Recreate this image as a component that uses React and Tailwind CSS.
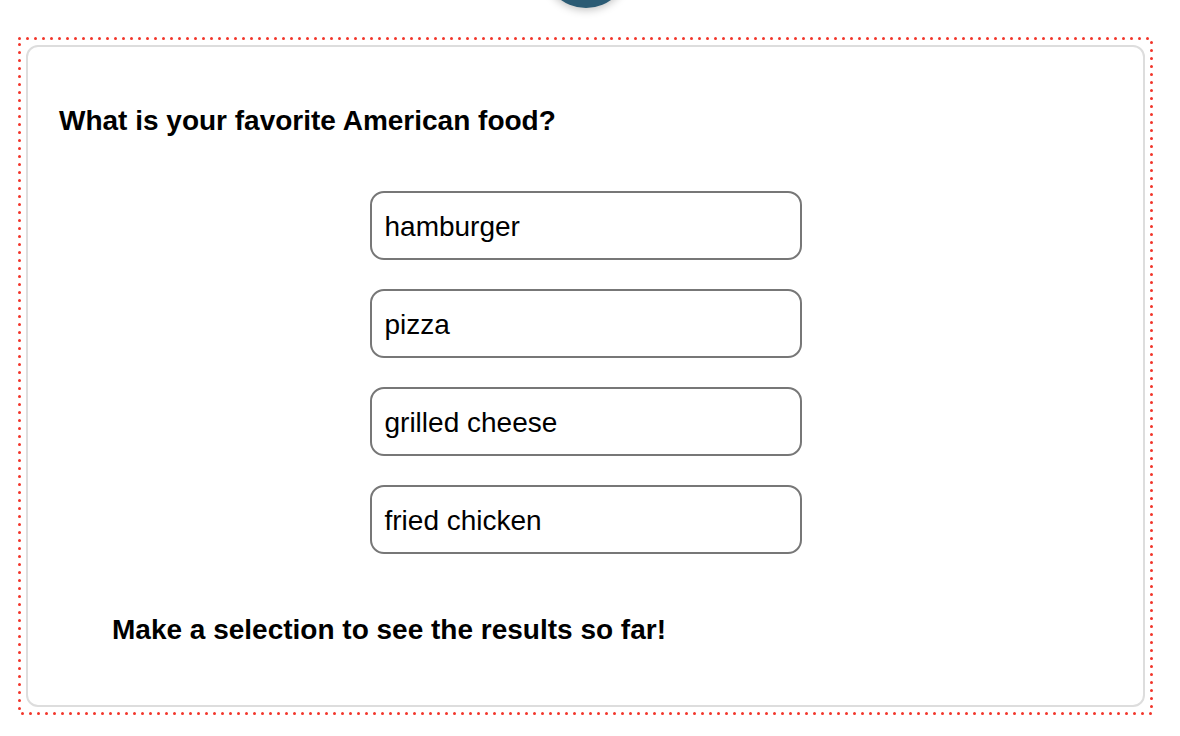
import React from "react";

const OPTIONS = ["hamburger", "pizza", "grilled cheese", "fried chicken"];

export default function App() {
  return (
    <div
      className="min-h-screen w-full overflow-hidden bg-white text-black"
      style={{ fontFamily: '"Liberation Sans", Arial, sans-serif' }}
    >
      <div className="ml-[18px] w-[1135px]">
        <div className="mx-auto -mt-[78px] h-[86px] w-[86px] rounded-full bg-[#2b5b74] shadow-[0_2px_8px_rgba(0,0,0,0.25)]" />
        <div className="relative mt-[29px] p-[8px]">
          {/* dotted frame, round dots like the reference */}
          <svg className="pointer-events-none absolute inset-0 h-full w-full" aria-hidden="true">
            <rect
              x="1.5"
              y="1.5"
              width="1132"
              height="675"
              fill="none"
              stroke="#f2362b"
              strokeWidth="3"
              strokeLinecap="round"
              strokeDasharray="0 8"
            />
          </svg>
          <div className="rounded-[12px] border-2 border-[#dddddd] px-[31px] pb-[59px] pt-[58px]">
            <h2 className="text-[28px] font-bold leading-[32px]">
              What is your favorite American food?
            </h2>
            <div className="mt-[54px] flex flex-col items-center gap-[29px]">
              {OPTIONS.map((opt) => (
                <button
                  key={opt}
                  className="flex h-[69px] w-[432px] items-center rounded-[14px] border-2 border-[#777777] bg-white px-[13px] pt-[3px] text-left text-[28px] leading-[32px]"
                >
                  {opt}
                </button>
              ))}
            </div>
            <p className="ml-[53px] mt-[60px] text-[28px] font-bold leading-[32px]">
              Make a selection to see the results so far!
            </p>
          </div>
        </div>
      </div>
    </div>
  );
}
